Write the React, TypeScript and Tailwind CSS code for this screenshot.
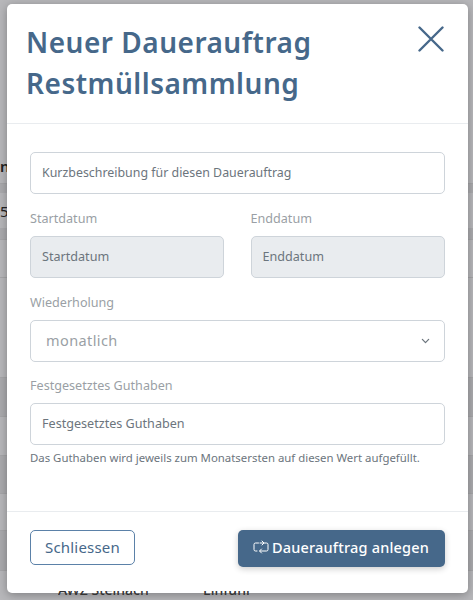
import React from "react";

const font = "font-['Noto_Sans','Open_Sans',sans-serif]";

const bands: { h: number; cls: string }[] = [
  { h: 183, cls: "bg-[#b7b7ba]" },
  { h: 10, cls: "bg-[#ababae] border-t border-[#a5a5a8]" },
  { h: 35, cls: "bg-[#b7b7ba]" },
  { h: 11, cls: "bg-[#ababae]" },
  { h: 38, cls: "bg-[#b7b7ba] border-t border-[#a5a5a8]" },
  { h: 100, cls: "bg-[#b7b7ba] border-t border-[#a5a5a8]" },
  { h: 39, cls: "bg-[#ababae] border-t border-[#a5a5a8]" },
  { h: 39, cls: "bg-[#b7b7ba] border-t border-[#a5a5a8]" },
  { h: 38, cls: "bg-[#ababae] border-t border-[#a5a5a8]" },
  { h: 37, cls: "bg-[#b7b7ba] border-t border-[#a5a5a8]" },
  { h: 40, cls: "bg-[#ababae] border-t border-[#a5a5a8]" },
  { h: 30, cls: "bg-[#b7b7ba] border-t border-[#a5a5a8]" },
];

export default function App() {
  return (
    <div className={`relative h-[600px] w-[473px] overflow-hidden ${font}`}>
      <div className="flex flex-col">
        {bands.map((b, i) => (
          <div key={i} style={{ height: b.h }} className={b.cls} />
        ))}
      </div>
      <div className="absolute left-0 top-[156px] text-[15px] font-semibold leading-[20px] text-[#222]">n</div>
      <div className="absolute left-0 top-[201px] text-[15px] leading-[20px] text-[#222]">5</div>

      <div className="absolute left-[7px] top-[4px] flex h-[588.5px] w-[460.500px] flex-col rounded-[5px] bg-white shadow-[0_2px_10px_rgba(0,0,0,0.3)]">
        <div className="flex h-[120px] items-start justify-between border-b border-[#e9ecef] pl-[19px] pr-[24px] pt-[18px]">
          <h1 className="text-[28px] font-semibold leading-[41px] tracking-[0.5px] text-[#46688a]">
            Neuer Dauerauftrag
            <br />
            Restmüllsammlung
          </h1>
          <svg width="26" height="26" viewBox="0 0 26 26" className="mt-[4px]" fill="none" stroke="#46688a" strokeWidth="2.4" strokeLinecap="round">
            <path d="M1.500 1.500 24.500 24.500M24.500 1.500 1.500 24.500" />
          </svg>
        </div>
        <div className="flex flex-1 flex-col pl-[23px] pr-[23px] pt-[28px]">
          <div className="flex h-[42px] items-center rounded-[5px] border border-[#ced4da] px-[11px] text-[12.4px] text-[#6c757d]">
            Kurzbeschreibung für diesen Dauerauftrag
          </div>
          <div className="mt-[15px] flex gap-[27px]">
            <div className="w-[193.500px]">
              <div className="text-[12.600px] leading-[20px] text-[#9a9fa5]">Startdatum</div>
              <div className="mt-[7px] flex h-[42px] items-center rounded-[5px] border border-[#ced4da] bg-[#e9ecef] px-[11px] text-[12.600px] text-[#6c757d]">Startdatum</div>
            </div>
            <div className="w-[194px]">
              <div className="text-[12.600px] leading-[20px] text-[#9a9fa5]">Enddatum</div>
              <div className="mt-[7px] flex h-[42px] items-center rounded-[5px] border border-[#ced4da] bg-[#e9ecef] px-[11px] text-[12.600px] text-[#6c757d]">Enddatum</div>
            </div>
          </div>
          <div className="mt-[15px] text-[12.600px] leading-[20px] text-[#9a9fa5]">Wiederholung</div>
          <div className="mt-[7px] flex h-[42px] items-center justify-between rounded-[5px] border border-[#ced4da] pl-[15px] pr-[14px] text-[14.500px] tracking-[0.4px] text-[#9a9fa5]">
            <span>monatlich</span>
            <svg width="9" height="6" viewBox="0 0 10 6" fill="none" stroke="#6c757d" strokeWidth="1.4" strokeLinecap="round" strokeLinejoin="round">
              <path d="M1.500 1.200 5 4.800 8.500 1.200" />
            </svg>
          </div>
          <div className="mt-[14px] text-[12.600px] leading-[20px] text-[#9a9fa5]">Festgesetztes Guthaben</div>
          <div className="mt-[7px] flex h-[42px] items-center rounded-[5px] border border-[#ced4da] px-[11px] text-[12.600px] text-[#6c757d]">
            Festgesetztes Guthaben
          </div>
          <div className="mt-[4px] text-[11.400px] leading-[18px] text-[#6c757d]">
            Das Guthaben wird jeweils zum Monatsersten auf diesen Wert aufgefüllt.
          </div>
        </div>
        <div className="flex h-[82px] items-start justify-between border-t border-[#e9ecef] pl-[23px] pr-[23px] pt-[18px]">
          <div className="flex h-[35px] w-[105px] items-center justify-center rounded-[5px] border border-[#5b81a8] text-[15px] tracking-[0.2px] text-[#46688a]">Schliessen</div>
          <div className="flex h-[37px] w-[207px] items-center justify-center gap-[3px] rounded-[5px] bg-[#46688a] text-[14.500px] font-medium tracking-[0.2px] text-white shadow-[0_2px_6px_rgba(0,0,0,0.2)]">
            <svg width="16" height="16" viewBox="0 0 16 16" fill="none" stroke="white" strokeWidth="1" strokeLinecap="round" strokeLinejoin="round">
              <path d="M5.500 3H2.500A1.500 1.500 0 0 0 1 4.500v5A1.500 1.500 0 0 0 2.500 11H4M7 3h6.500A1.500 1.500 0 0 1 15 4.500v5a1.500 1.500 0 0 1-1.500 1.500H7M9 1l2 2-2 2M8.500 9l-2 2 2 2" />
            </svg>
            Dauerauftrag anlegen
          </div>
        </div>
      </div>
      <div className="absolute left-[58px] top-[580px] text-[14px] font-medium leading-[20px] text-[#333] [clip-path:inset(11px_0_0_0)]">AWZ Steinach</div>
      <div className="absolute left-[203px] top-[580px] text-[14px] font-medium leading-[20px] text-[#333] [clip-path:inset(11px_0_0_0)]">Einfuhr</div>
    </div>
  );
}
